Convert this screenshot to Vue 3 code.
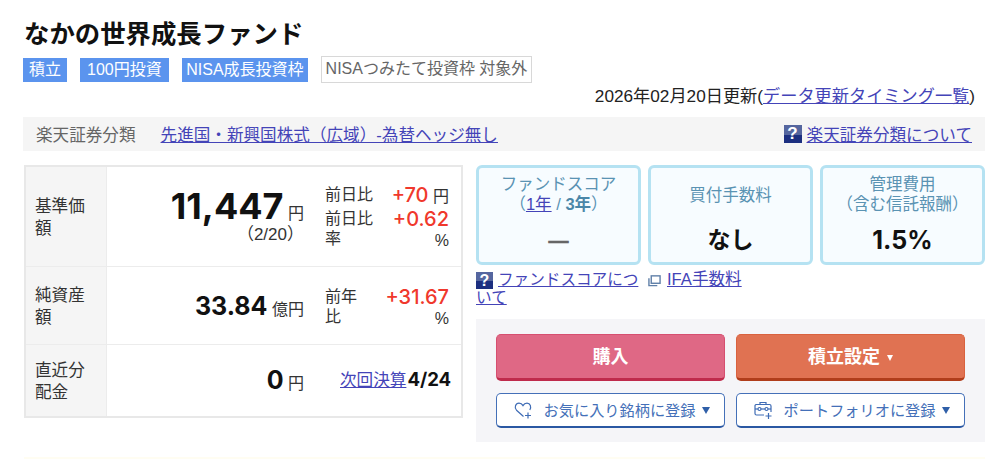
<template>
  <div class="page">
    <h1 class="fund-name">なかの世界成長ファンド</h1>
    <div class="tags">
      <span class="tag">積立</span>
      <span class="tag tag-wide">100円投資</span>
      <span class="tag tag-tight">NISA成長投資枠</span>
      <span class="tag tag-off">NISAつみたて投資枠 対象外</span>
    </div>
    <p class="updated">2026年02月20日更新(<a href="#">データ更新タイミング一覧</a>)</p>

    <div class="class-bar">
      <span class="class-label">楽天証券分類</span>
      <a href="#" class="class-link">先進国・新興国株式（広域）-為替ヘッジ無し</a>
      <span class="class-help">
        <span class="help-icon">?</span>
        <a href="#">楽天証券分類について</a>
      </span>
    </div>

    <div class="main">
      <div class="price-table">
        <div v-for="row in rows" :key="row.label" class="row" :class="row.cls">
          <div class="row-label">{{ row.label }}</div>
          <div class="row-value">
            <div class="value-main">
              <div class="value-line"><b :class="row.bigCls">{{ row.value }}</b> <span class="unit">{{ row.unit }}</span></div>
              <div v-if="row.date" class="date">（2/20）</div>
            </div>
            <div class="value-side" v-if="row.diffs">
              <div v-for="d in row.diffs" :key="d.name" class="diff">
                <span class="diff-name">{{ d.name }}</span>
                <span class="diff-num"><em>{{ d.num }}</em> <span class="diff-unit">{{ d.unit }}</span></span>
              </div>
            </div>
            <div class="value-side next" v-else><a href="#">次回決算</a><b>4/24</b></div>
          </div>
        </div>
      </div>

      <div class="right">
        <div class="cards">
          <div class="card">
            <div class="card-title">ファンドスコア<br />（<a href="#">1年</a> / <b>3年</b>）</div>
            <div class="card-value dash">—</div>
          </div>
          <div class="card">
            <div class="card-title single">買付手数料</div>
            <div class="card-value">なし</div>
          </div>
          <div class="card">
            <div class="card-title">管理費用<br />（含む信託報酬）</div>
            <div class="card-value pct">1.5%</div>
          </div>
        </div>

        <div class="links">
          <div class="score-link">
            <span class="help-icon small">?</span>
            <a href="#">ファンドスコアについて</a>
          </div>
          <div class="ifa-link">
            <svg class="win-icon" viewBox="0 0 14 14" fill="none" stroke="#5f7fa8" stroke-width="1.5"><rect x="3.5" y="2" width="9.5" height="8" /><path d="M1 4.5V12.5H10" /></svg>
            <a href="#">IFA手数料</a>
          </div>
        </div>

        <div class="actions">
          <button class="btn btn-buy">購入</button>
          <button class="btn btn-plan">積立設定 <i class="caret small"></i></button>
          <button class="btn-sub">
            <svg class="sub-icon" viewBox="0 0 20 20" fill="none" stroke="#3f6cb5" stroke-width="1.2"><path d="M10.5 16.5 3.5 10.2C1 7.6 2.5 3.2 6 3.2c1.8 0 3.2 1 4 2.4.8-1.4 2.2-2.4 4-2.4 3.4 0 4.6 4 2.8 6.8" /><path d="M15 12.5v6M12 15.5h6" /></svg>
            <span>お気に入り銘柄に登録</span><i class="caret"></i>
          </button>
          <button class="btn-sub">
            <svg class="sub-icon" viewBox="0 0 20 20" fill="none" stroke="#3f6cb5" stroke-width="1.2"><path d="M7 4.5V2.5h6v2" /><path d="M11 15H3.5a1.5 1.5 0 0 1-1.5-1.5v-8A1.5 1.5 0 0 1 3.5 4.5h13A1.5 1.5 0 0 1 18 6v6" /><path d="M2 9h16" /><circle cx="6.5" cy="9" r="1.5" fill="#fff" /><circle cx="13.5" cy="9" r="1.5" fill="#fff" /><path d="M15.5 13v6M12.5 16h6" /></svg>
            <span>ポートフォリオに登録</span><i class="caret"></i>
          </button>
        </div>
      </div>
    </div>
    <div class="notice"></div>
  </div>
</template>

<script setup>
const rows = [
  {
    label: '基準価額',
    value: '11,447',
    unit: '円',
    date: true,
    cls: 'row-nav',
    bigCls: 'big',
    diffs: [
      { name: '前日比', num: '+70', unit: '円' },
      { name: '前日比率', num: '+0.62', unit: '%' },
    ],
  },
  {
    label: '純資産額',
    value: '33.84',
    unit: '億円',
    cls: 'row-assets',
    bigCls: 'mid',
    diffs: [{ name: '前年比', num: '+31.67', unit: '%' }],
  },
  { label: '直近分配金', value: '0', unit: '円', cls: 'row-dist', bigCls: 'mid' },
]
</script>

<style>
html, body {
  margin: 0;
  background: #fff;
  overflow: hidden;
}
</style>

<style scoped>
.page {
  width: 1000px;
  height: 459px;
  box-sizing: border-box;
  padding: 17px 15px 0 23px;
  overflow: hidden;
  font-family: "Liberation Sans", "Noto Sans CJK JP", sans-serif;
  color: #222;
}

a {
  color: #4444b8;
  text-decoration: underline;
}

.fund-name {
  margin: 0 0 0 1px;
  font-size: 25.4px;
  line-height: 34px;
  font-weight: 700;
  color: #111;
}

.tags {
  display: flex;
  align-items: center;
  gap: 13px;
  margin-top: 5px;
  height: 27px;
}

.tag {
  height: 24px;
  line-height: 23px;
  padding: 0 6px;
  font-size: 16px;
  color: #fff;
  background: #5b94ee;
  box-sizing: border-box;
}

.tag-wide {
  padding: 0 7px;
}

.tag-tight {
  padding: 0 4.5px;
}

.tag-off {
  height: 27px;
  line-height: 23px;
  padding: 0 3.5px;
  color: #666;
  background: #fff;
  border: 1.5px solid #d8d8d8;
}

.updated {
  margin: 1px 10px 0 0;
  font-size: 17.2px;
  line-height: 24px;
  text-align: right;
  color: #222;
}

.class-bar {
  display: flex;
  align-items: center;
  height: 34px;
  margin-top: 9px;
  padding: 0 13px;
  background: #f5f5f5;
  font-size: 16.6px;
}

.class-label {
  color: #666;
  margin-right: 25px;
}

.class-help {
  margin-left: auto;
  display: flex;
  align-items: center;
  gap: 5px;
}

.help-icon {
  display: inline-block;
  width: 18px;
  height: 18px;
  flex: none;
  background: linear-gradient(#55669f 55%, #1c2f80 55%);
  color: #fff;
  font-size: 17px;
  line-height: 18px;
  font-weight: 700;
  text-align: center;
}

.help-icon.small {
  width: 17px;
  height: 17px;
  line-height: 17px;
  font-size: 16px;
  vertical-align: -1px;
  margin-right: 5px;
}

.main {
  display: flex;
  margin-top: 14px;
  gap: 13px;
}

.price-table {
  width: 439px;
  height: 253px;
  margin-left: 1px;
  box-sizing: border-box;
  border: 2.5px solid #e8e8e8;
  display: flex;
  flex-direction: column;
}

.row {
  display: flex;
  border-bottom: 1.5px solid #ececec;
}

.row:last-child {
  border-bottom: 0;
}

.row-nav { height: 98.5px; }
.row-assets { height: 77px; }
.row-dist { flex: 1; }

.row-label {
  width: 81px;
  flex: none;
  box-sizing: border-box;
  padding: 4px 10px 0 9px;
  background: #f5f5f5;
  border-right: 1.5px solid #ececec;
  display: flex;
  align-items: center;
  font-size: 16.6px;
  line-height: 22px;
  color: #333;
}

.row-value {
  flex: 1;
  display: flex;
  align-items: center;
  padding: 0 12px 0 0;
}

.value-main {
  width: 197px;
  flex: none;
  text-align: right;
  font-size: 16px;
  color: #333;
}

.row-nav .value-line {
  height: 37px;
  line-height: 37px;
}

.row-assets .value-main {
  padding-top: 2px;
}

.big {
  font-family: Inter, "Liberation Sans", sans-serif;
  font-size: 36px;
  font-weight: 700;
  color: #111;
}

.mid {
  font-family: Inter, "Liberation Sans", sans-serif;
  font-size: 25px;
  line-height: 32px;
  font-weight: 700;
  color: #111;
}

.unit {
  font-size: 16px;
  color: #333;
}

.date {
  font-size: 17px;
  line-height: 20px;
  color: #333;
}

.value-side {
  flex: 1;
  margin-left: 21px;
  font-size: 16px;
  line-height: 20px;
}

.row-nav .value-side {
  padding-top: 4px;
}

.row-assets .value-side {
  padding-top: 5px;
}

.diff {
  display: flex;
  justify-content: space-between;
  margin: 2px 0;
}

.diff-name {
  width: 50px;
  flex: none;
  color: #333;
  line-height: 20px;
}

.row-assets .diff-name {
  width: 36px;
}

.diff-num {
  width: 70px;
  flex: none;
  text-align: right;
  line-height: 20px;
}

.diff-num em {
  font-family: Inter, "Liberation Sans", sans-serif;
  font-style: normal;
  font-size: 20px;
  font-weight: 500;
  color: #f0382c;
}

.diff-unit {
  color: #333;
}

.next {
  margin-left: 36px;
  margin-right: -3px;
  font-size: 16.6px;
  white-space: nowrap;
}

.next b {
  font-family: Inter, "Liberation Sans", sans-serif;
  font-size: 18.6px;
  margin-left: 1px;
  color: #111;
}

.right {
  width: 509px;
  flex: none;
}

.cards {
  display: grid;
  grid-template-columns: repeat(3, 165px);
  gap: 7px;
}

.card {
  height: 100px;
  box-sizing: border-box;
  border: 3px solid #b5e2f2;
  border-radius: 6px;
  background: #f7fcff;
  text-align: center;
  display: flex;
  flex-direction: column;
  padding-top: 6px;
}

.card-title {
  font-size: 16.5px;
  line-height: 20px;
  color: #5a93b3;
  height: 51px;
}

.card-title b {
  color: #4b87a8;
}

.card-title.single {
  display: flex;
  align-items: center;
  justify-content: center;
  height: 42px;
  margin-bottom: 9px;
}

.card-value {
  font-family: Inter, "Noto Sans CJK JP", sans-serif;
  font-size: 23px;
  line-height: 30px;
  font-weight: 700;
  color: #111;
}

.dash {
  font-family: "Liberation Sans", sans-serif;
  font-size: 20px;
  color: #666;
  -webkit-text-stroke: 0.6px #666;
}

.pct {
  font-size: 25px;
}

.links {
  display: flex;
  margin-top: 6px;
  height: 48px;
  font-size: 16.6px;
  line-height: 18px;
}

.score-link {
  width: 164px;
  margin-right: 8px;
  font-size: 15.6px;
}

.ifa-link .win-icon {
  width: 13px;
  height: 13px;
  vertical-align: -2px;
  margin-right: 6px;
}

.actions {
  display: grid;
  grid-template-columns: 229px 229px;
  grid-template-rows: 47px 35px;
  gap: 12px 11px;
  padding: 15px 20px 14px;
  background: #f5f5f8;
}

.btn {
  border-radius: 5px;
  color: #fff;
  font: inherit;
  font-size: 18px;
  font-weight: 700;
  padding: 0 0 3px;
}

.btn-buy {
  background: #df6885;
  border: 1px solid #d64f70;
  border-bottom: 3px solid #bf2b4c;
}

.btn-plan {
  background: #e07252;
  border: 1px solid #d9623f;
  border-bottom: 3px solid #b03d1b;
}

.btn-sub {
  display: flex;
  align-items: center;
  justify-content: center;
  gap: 9px;
  background: #fff;
  border: 1px solid #4470b8;
  border-bottom: 2px solid #2a58a3;
  border-radius: 5px;
  font: inherit;
  font-size: 15.2px;
  color: #4470b8;
  padding: 0 0 0 2px;
}

.btn-sub span {
  margin: -2px -2px 0 2px;
}

.sub-icon {
  width: 20px;
  height: 20px;
  flex: none;
}

.caret {
  display: inline-block;
  width: 0;
  height: 0;
  border-left: 4px solid transparent;
  border-right: 4px solid transparent;
  border-top: 7px solid #2f5fa8;
}

.caret.small {
  border-left-width: 3.5px;
  border-right-width: 3.5px;
  border-top: 6px solid #fff;
  vertical-align: 2px;
  margin-left: 2px;
}

.notice {
  height: 10px;
  margin-top: 15px;
  margin-left: 1px;
  background: #fffdf2;
}
</style>
